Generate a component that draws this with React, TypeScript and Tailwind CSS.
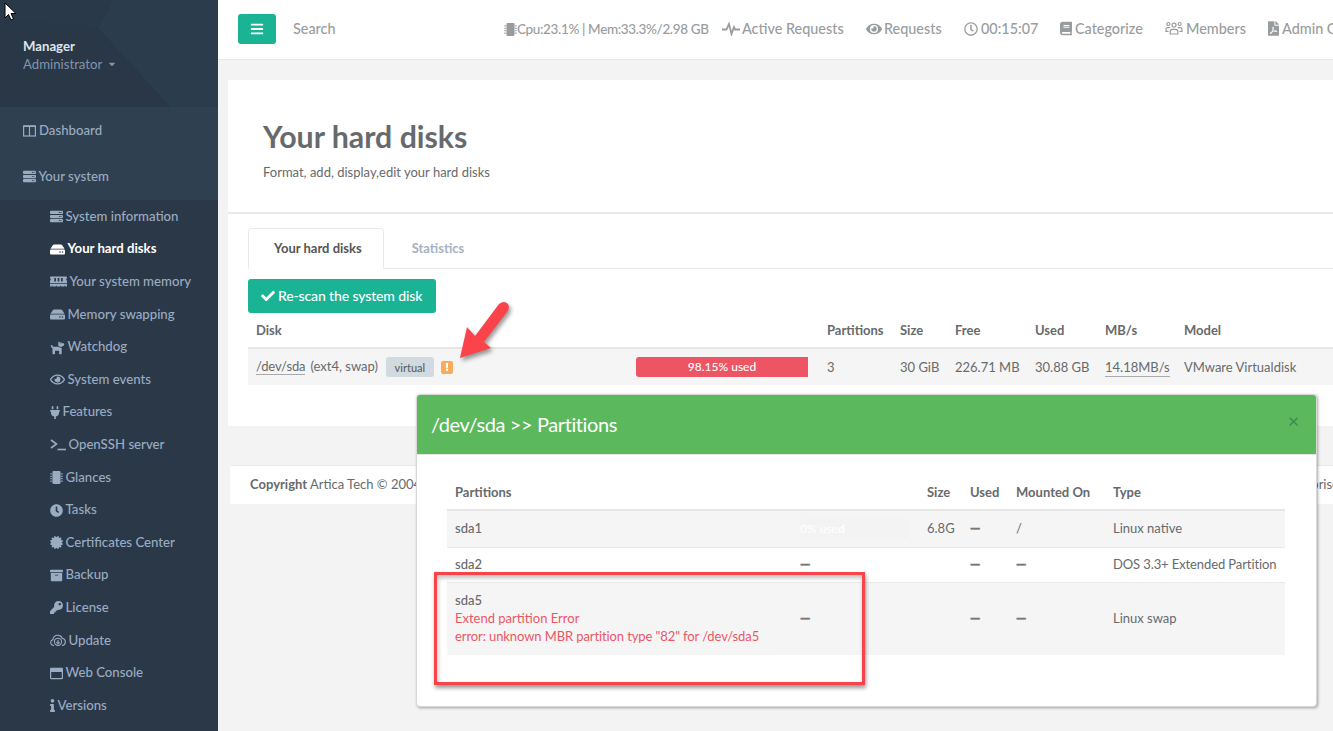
import React from "react";
import {
  FaServer, FaHdd, FaMemory, FaDog, FaEye, FaPlug, FaMicrochip, FaClock, FaCertificate, FaArchive, FaKey,
  FaRegWindowMaximize, FaInfo, FaRegClock, FaBook, FaFilePdf, FaCheck, FaExclamation, FaBars, FaCaretDown, FaRegEye,
} from "react-icons/fa";

function Terminal() {
  return (
    <svg width="16" height="13" viewBox="0 0 16 13" fill="none" stroke="currentColor" strokeWidth="1.6">
      <path d="M1 2l5.5 4L1 10" />
      <path d="M7.5 11.5H16" />
    </svg>
  );
}

function CloudCircle() {
  return (
    <svg width="16" height="14" viewBox="0 0 16 14" fill="none" stroke="currentColor" strokeWidth="1.1">
      <path d="M4 12.5H3.5A3 3 0 0 1 3 6.6 4.8 4.8 0 0 1 12.2 5.2 3.7 3.7 0 0 1 12.3 12.5H12" />
      <circle cx="8" cy="8.8" r="3.6" fill="#2a3848" />
      <path d="M8 6.8v4M6.4 9.2 8 10.8l1.6-1.6" />
    </svg>
  );
}

function PanelIcon() {
  return (
    <svg width="13" height="12" viewBox="0 0 13 12" fill="none" stroke="currentColor" strokeWidth="1.2">
      <rect x="0.6" y="1" width="11.8" height="10" />
      <path d="M6.5 1v10" />
      <path d="M0.6 1.2h11.8" strokeWidth="1.6" />
    </svg>
  );
}

function People() {
  return (
    <svg width="18" height="15" viewBox="0 0 18 15" fill="none" stroke="currentColor" strokeWidth="1.2">
      <circle cx="9" cy="4.2" r="2" />
      <circle cx="3.4" cy="3" r="1.5" />
      <circle cx="14.6" cy="3" r="1.5" />
      <path d="M5.2 13V10.6A2.2 2.2 0 0 1 7.4 8.4H10.6A2.2 2.2 0 0 1 12.8 10.6V13Z" />
      <path d="M3.6 10.4H1V8.4A1.8 1.8 0 0 1 2.8 6.6H5.2" />
      <path d="M14.4 10.4H17V8.4A1.8 1.8 0 0 0 15.2 6.6H12.8" />
    </svg>
  );
}

const sub: [React.ReactNode, string, boolean?][] = [
  [<FaServer size={13} />, "System information"],
  [<FaHdd size={15} />, "Your hard disks", true],
  [<FaMemory size={17} />, "Your system memory"],
  [<FaHdd size={15} />, "Memory swapping"],
  [<FaDog size={15} />, "Watchdog"],
  [<FaRegEye size={15} />, "System events"],
  [<FaPlug size={13} className="w-[10px] h-[13px]" />, "Features"],
  [<Terminal />, "OpenSSH server"],
  [<FaMicrochip size={13} />, "Glances"],
  [<FaClock size={13} />, "Tasks"],
  [<FaCertificate size={13} />, "Certificates Center"],
  [<FaArchive size={13} />, "Backup"],
  [<FaKey size={13} />, "License"],
  [<CloudCircle />, "Update"],
  [<FaRegWindowMaximize size={13} />, "Web Console"],
  [<FaInfo size={13} className="w-[5px] h-[13px]" />, "Versions"],
];

const top: [React.ReactNode, string, string, string][] = [
  [<FaMicrochip size={13} />, "Cpu:23.1% | Mem:33.3%/2.98 GB", "w-[218px]", "text-[13.5px] tracking-[-0.35px]"],
  [<svg width="18" height="14" viewBox="0 0 18 14" fill="none" stroke="currentColor" strokeWidth="1.8"><path d="M0 7.5h4.5L7 2l2.5 10L12 5l1.2 2.5H18" /></svg>, "Active Requests", "w-[144px] gap-[2px]", ""],
  [<FaEye size={16} />, "Requests", "w-[98px] gap-[2px]", ""],
  [<FaRegClock size={14} />, "00:15:07", "w-[96px] gap-[3px]", ""],
  [<FaBook size={14} className="w-[12px] h-[15px]" />, "Categorize", "w-[105px] gap-[3px]", ""],
  [<People />, "Members", "w-[103px] gap-[3px]", ""],
  [<FaFilePdf size={15} className="w-[11px] h-[15px]" />, "Admin Guide", "w-[110px] gap-[3px]", ""],
];

function Dash() {
  return <span className="font-bold text-[#777] [-webkit-text-stroke:0.6px_#777]">—</span>;
}

export default function App() {
  return (
    <div className="relative flex w-[1333px] h-[731px] overflow-hidden bg-[#f3f3f4] font-[Lato,sans-serif] text-[13px] text-[#676a6c]">
      <aside className="flex flex-col w-[218px] shrink-0 bg-[#2a3848] text-[#9bacc2] text-[13.2px]">
        <div className="relative h-[107px] overflow-hidden bg-[#283645] pl-[23px] pt-[38px]">
          <svg className="absolute inset-0" width="218" height="107" viewBox="0 0 218 107">
            <polygon points="98,28 113,0 218,0 218,107 170,107" fill="#2b3c4d" />
            <polygon points="0,0 113,0 98,28 0,20" fill="#2a3949" />
            <polygon points="0,20 98,28 170,107 0,107" fill="#293746" />
          </svg>
          <div className="relative font-bold text-[#dfe4ed] leading-[17px]">Manager</div>
          <div className="relative flex items-center gap-[5px] leading-[18px] text-[#8095ad]">
            Administrator <FaCaretDown size={10} />
          </div>
        </div>
        <div className="bg-[#2f4051]">
          <div className="flex items-center h-[46px] pl-[23px] pt-px gap-[3px] font-medium">
            <PanelIcon /> Dashboard
          </div>
          <div className="flex items-center h-[47px] pl-[23px] gap-[2.5px] font-medium">
            <FaServer size={13} /> Your system
          </div>
        </div>
        <div className="pt-[0.45px]">
          {sub.map(([icon, label, active]) => (
            <div
              key={label}
              className={`flex items-center h-[32.6px] pl-[50px] gap-[2.5px] ${active ? "font-bold text-white" : "font-medium"}`}
            >
              {icon}
              <span>{label}</span>
            </div>
          ))}
        </div>
      </aside>

      <div className="flex-1 min-w-0 flex flex-col">
        <header className="flex items-center h-[60px] shrink-0 bg-white border-b border-[#e7eaec] pl-[20px] pb-[1px] text-[#999c9e] text-[14.4px] font-medium whitespace-nowrap">
          <button className="flex items-center justify-center shrink-0 w-[38px] h-[30px] rounded-[3px] bg-[#1ab394] text-white">
            <FaBars size={14} />
          </button>
          <span className="ml-[17px] w-[211px] shrink-0">Search</span>
          {top.map(([icon, label, w, t]) => (
            <span key={label} className={`flex items-center shrink-0 ${w} ${t}`}>
              {icon}
              {label}
            </span>
          ))}
        </header>

        <main className="pl-[10px] pt-[20px]">
          <div className="w-[1115px] bg-white">
            <div className="h-[134px] border-b-2 border-[#e7eaec] pl-[35px] pt-[38px]">
              <h1 className="text-[30.3px] font-bold leading-[36px]">Your hard disks</h1>
              <p className="mt-[9px] leading-[18px]">Format, add, display,edit your hard disks</p>
            </div>
            <div className="pl-[20px] pt-[14px] h-[212px]">
              <div className="flex h-[41px] border-b border-[#e7eaec]">
                <div className="flex items-center h-[41px] pl-[25px] pr-[21px] border border-b-white border-[#e7eaec] rounded-t-[4px] font-bold text-[#555]">
                  Your hard disks
                </div>
                <div className="flex items-center px-[28px] pt-px font-bold text-[#a7b1c2]">Statistics</div>
              </div>
              <button className="flex items-center gap-[3px] h-[34px] w-[188px] mt-[10px] pl-[13px] pb-[1px] rounded-[3px] bg-[#1ab394] text-white text-[14px] tracking-[-0.13px] font-medium">
                <FaCheck size={14} /> Re-scan the system disk
              </button>
              <table className="table-fixed w-[1085px] border-collapse text-left">
                <colgroup>
                  <col className="w-[380px]" />
                  <col className="w-[191px]" />
                  <col className="w-[73px]" />
                  <col className="w-[55px]" />
                  <col className="w-[80px]" />
                  <col className="w-[70px]" />
                  <col className="w-[79px]" />
                  <col className="w-[157px]" />
                </colgroup>
                <thead>
                  <tr className="h-[35px] border-b-2 border-[#e7e7e7]">
                    <th className="px-2 pt-[2px] font-bold">Disk</th>
                    <th />
                    <th className="px-2 pt-[2px] font-bold">Partitions</th>
                    <th className="px-2 pt-[2px] font-bold">Size</th>
                    <th className="px-2 pt-[2px] font-bold">Free</th>
                    <th className="px-2 pt-[2px] font-bold">Used</th>
                    <th className="px-2 pt-[2px] font-bold">MB/s</th>
                    <th className="px-2 pt-[2px] font-bold">Model</th>
                  </tr>
                </thead>
                <tbody>
                  <tr className="h-[37px] bg-[#f5f5f5] whitespace-nowrap">
                    <td className="px-2">
                      <span className="flex items-center">
                        <span className="border-b border-[#aaa] leading-[15px] tracking-[-0.1px]">/dev/sda</span>
                        <span className="ml-[5px]">(ext4, swap)</span>
                        <span className="ml-[8px] flex items-center justify-center w-[48px] h-[20px] pt-[2px] rounded-[3px] bg-[#d1dade] text-[11px] font-medium text-[#5e5e5e]">
                          virtual
                        </span>
                        <span className="ml-[7px] flex items-center justify-center w-[12px] h-[13px] rounded-[2px] bg-[#f8ac59] text-white">
                          <FaExclamation size={8} />
                        </span>
                      </span>
                    </td>
                    <td className="px-2">
                      <div className="flex items-center justify-center w-[172px] h-[20px] rounded-l-[3px] bg-[#ed5565] text-[12px] text-white font-medium">
                        98.15% used
                      </div>
                    </td>
                    <td className="px-2 pt-px">3</td>
                    <td className="px-2 pt-px">30 GiB</td>
                    <td className="px-2 pt-px">226.71 MB</td>
                    <td className="px-2 pt-px">30.88 GB</td>
                    <td className="px-2 pt-px">
                      <span className="border-b border-[#aaa] pb-[1px]">14.18MB/s</span>
                    </td>
                    <td className="px-2 pt-px">VMware Virtualdisk</td>
                  </tr>
                </tbody>
              </table>
            </div>
          </div>
          <div className="flex justify-between items-center mt-[39px] ml-[2px] w-[1113px] h-[39px] bg-white border-t border-[#e7eaec] px-[20px] whitespace-nowrap">
            <span>
              <b>Copyright</b> Artica Tech © 2004-2020
            </span>
            <span className="mr-[-16px]">Enterprise</span>
          </div>
        </main>
      </div>

      {/* Modal dialog */}
      <div className="absolute left-[416px] top-[394px] w-[901px] h-[313px] bg-white rounded-[4px] border border-[#d8d8d8] shadow-[1px_1px_3px_rgba(0,0,0,0.35)]">
        <div className="relative flex items-center h-[60px] pl-[14px] pb-[2px] bg-[#5cb85c] rounded-t-[3px] text-white text-[20px] tracking-[-0.4px] border-b border-[#e5e5e5]">
          /dev/sda &gt;&gt; Partitions
          <span className="absolute right-[17px] top-[14px] text-[20px] leading-[22px] font-medium text-[#3f8f50]">×</span>
        </div>
        <div className="pl-[30px] pt-[20px]">
          <table className="table-fixed w-[838px] border-collapse text-left">
            <colgroup>
              <col className="w-[345px]" />
              <col className="w-[127px]" />
              <col className="w-[43px]" />
              <col className="w-[46px]" />
              <col className="w-[97px]" />
              <col className="w-[180px]" />
            </colgroup>
            <thead>
              <tr className="h-[35px] border-b-2 border-[#e7e7e7]">
                <th className="px-2 pt-[2px] font-bold">Partitions</th>
                <th />
                <th className="px-2 pt-[2px] font-bold">Size</th>
                <th className="px-2 pt-[2px] font-bold">Used</th>
                <th className="px-2 pt-[2px] font-bold">Mounted On</th>
                <th className="px-2 pt-[2px] font-bold">Type</th>
              </tr>
            </thead>
            <tbody>
              <tr className="h-[37px] bg-[#f5f5f5] border-b border-[#e7eaec]">
                <td className="px-2 font-medium">sda1</td>
                <td className="px-2">
                  <div className="w-[110px] h-[20px] rounded-[3px] bg-[#f3f3f3] text-[12px] leading-[20px] font-medium text-white">0% used</div>
                </td>
                <td className="px-2">6.8G</td>
                <td className="px-2"><Dash /></td>
                <td className="px-2">/</td>
                <td className="px-2">Linux native</td>
              </tr>
              <tr className="h-[35px] border-b border-[#e7eaec]">
                <td className="px-2 font-medium">sda2</td>
                <td className="px-2"><Dash /></td>
                <td className="px-2"></td>
                <td className="px-2"><Dash /></td>
                <td className="px-2"><Dash /></td>
                <td className="px-2 whitespace-nowrap tracking-[-0.1px]">DOS 3.3+ Extended Partition</td>
              </tr>
              <tr className="h-[73px] bg-[#f5f5f5]">
                <td className="px-2 pb-[2px] leading-[18px]">
                  <div className="font-medium">sda5</div>
                  <div className="text-[#ed5565]">Extend partition Error</div>
                  <div className="text-[#ed5565] whitespace-nowrap tracking-[-0.1px]">error: unknown MBR partition type "82" for /dev/sda5</div>
                </td>
                <td className="px-2"><Dash /></td>
                <td className="px-2"></td>
                <td className="px-2"><Dash /></td>
                <td className="px-2"><Dash /></td>
                <td className="px-2">Linux swap</td>
              </tr>
            </tbody>
          </table>
        </div>
      </div>

      {/* Screenshot annotations */}
      <div className="absolute left-[434px] top-[572px] w-[431px] h-[113px] border-[3px] border-[#f8434a] shadow-[1px_3px_4px_rgba(0,0,0,0.4),inset_1px_3px_4px_rgba(0,0,0,0.25)]" />
      <svg className="absolute left-[450px] top-[295px]" width="70" height="75" viewBox="0 0 70 75">
        <g transform="translate(-450 -295)" style={{ filter: "drop-shadow(2px 3px 2px rgba(0,0,0,0.4))" }}>
          <path d="M460 358 L467 327 L475 336 L499 304 Q504 300 508 304 Q510 308 507 312 L484 342 L491 348 Z" fill="#fb4449" />
        </g>
      </svg>
      {/* Cursor */}
      <svg className="absolute left-[4px] top-[2px]" width="14" height="20" viewBox="0 0 14 20">
        <path d="M1 1 L1 16 L4.5 12.5 L7 18 L9.5 17 L7 11.5 L12 11.5 Z" fill="#fff" stroke="#000" strokeWidth="1" />
      </svg>
    </div>
  );
}
